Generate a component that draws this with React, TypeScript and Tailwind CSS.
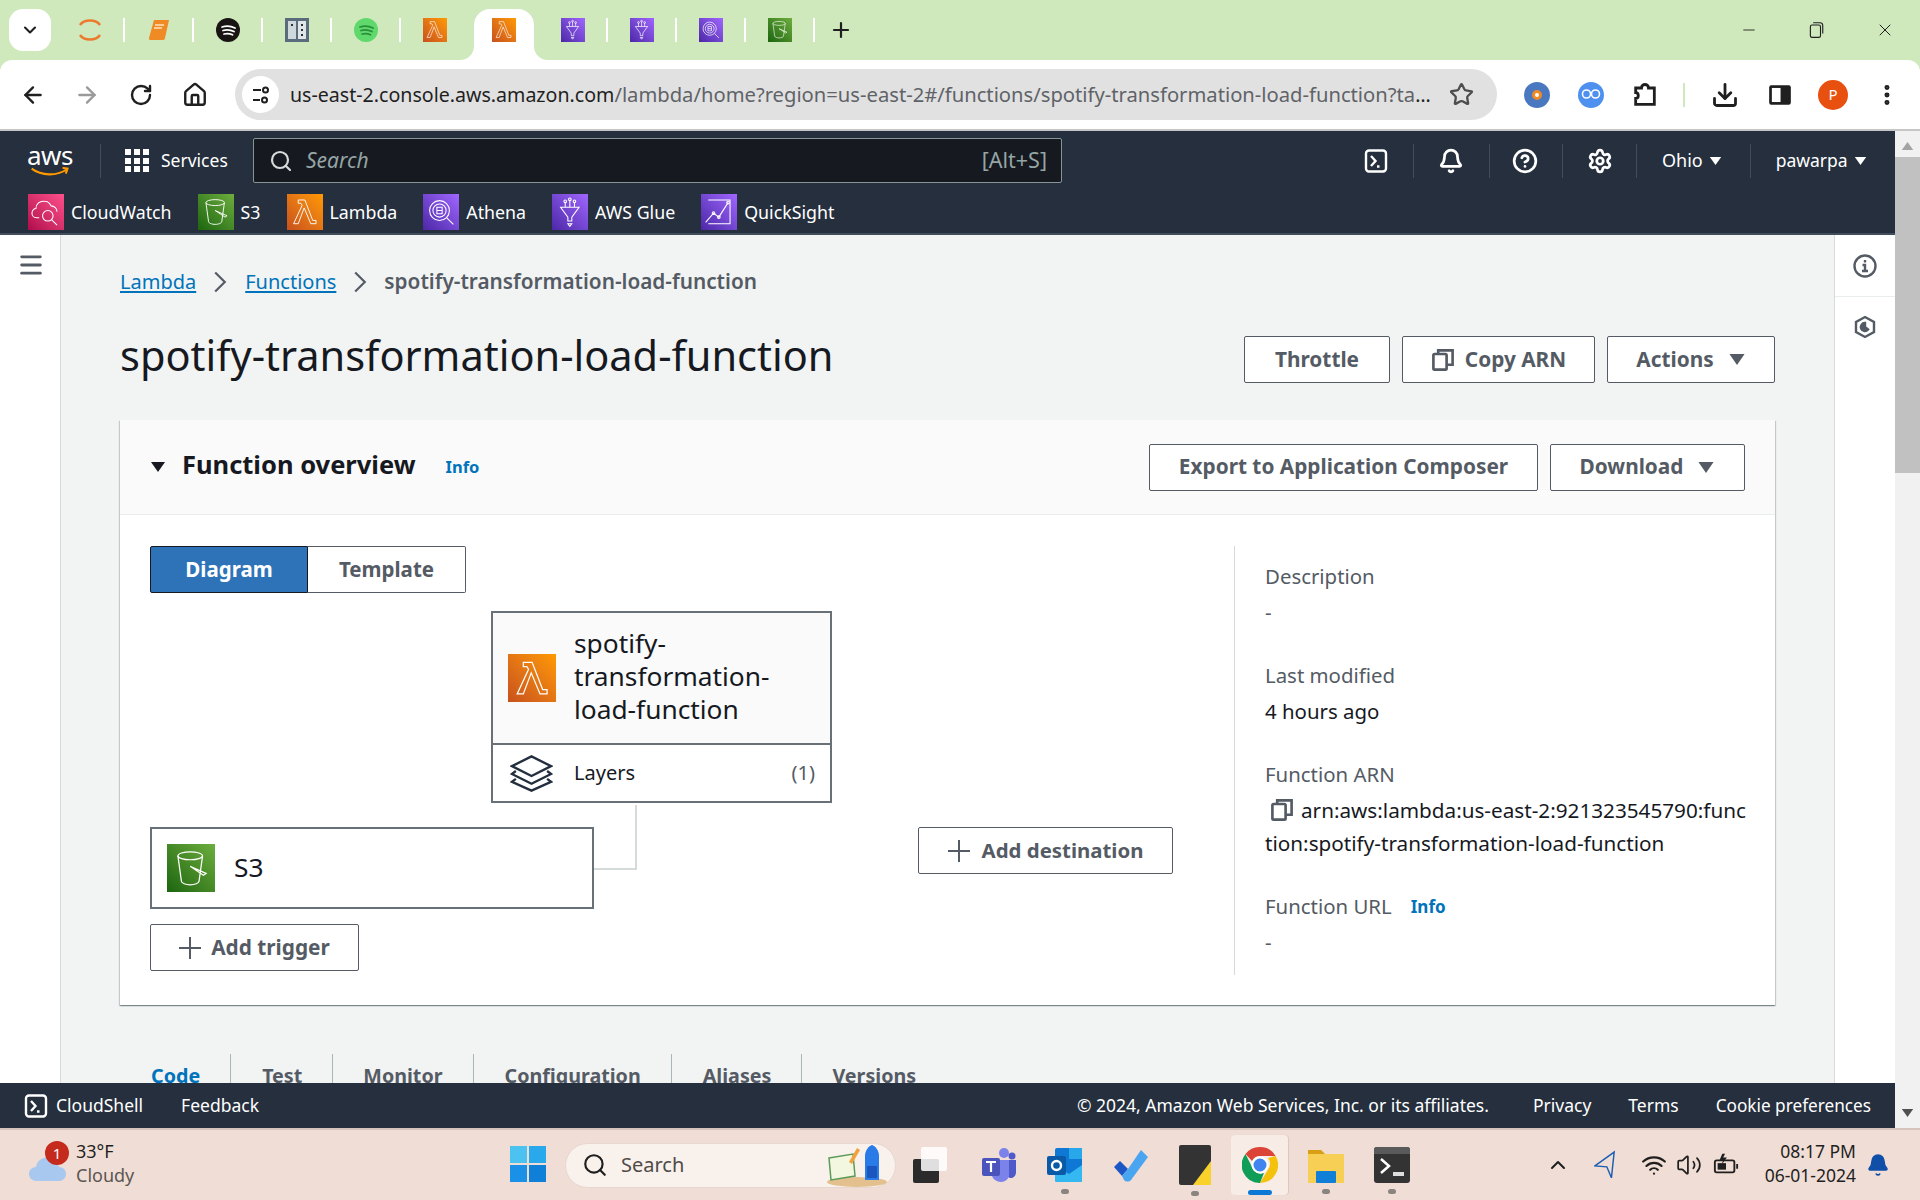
import React from "react";
import {
  ArrowLeft,
  ArrowRight,
  Bell,
  ChevronDown,
  ChevronUp,
  CircleHelp,
  Download,
  EllipsisVertical,
  House,
  Menu,
  Minus,
  Plus,
  RotateCw,
  Search,
  Settings,
  Star,
  Volume2,
  Wifi,
  X,
} from "lucide-react";

const Caret = ({ className = "" }: { className?: string }) => (
  <svg viewBox="0 0 16 12" className={className}>
    <path d="M1 1h14L8 11z" fill="currentColor" />
  </svg>
);

const LambdaGlyph = () => (
  <svg viewBox="0 0 48 48" className="w-[88%] h-[88%]" fill="none" stroke="#fff" strokeWidth="1.4">
    <path d="M14 6h10l12 31h5v5h-8L23 18l-9 24H7l13-28-2-3h-4z" />
  </svg>
);

const BucketGlyph = () => (
  <svg viewBox="0 0 48 48" className="w-[88%] h-[88%]" fill="none" stroke="#fff" strokeWidth="1.4">
    <ellipse cx="23" cy="10" rx="14" ry="4.500" />
    <path d="M9 10l4 29c0 2 5 4 10 4s10-2 10-4l4-29M23 22l18 8-3 2z" />
  </svg>
);

const GlueGlyph = () => (
  <svg viewBox="0 0 48 48" className="w-[88%] h-[88%]" fill="none" stroke="#fff" strokeWidth="1.6">
    <path d="M10 17h28L27 32v6h-6v-6zM24 6v11M17 9v8M31 9v8M21 42h6l-3 4z" />
    <circle cx="24" cy="5" r="2" />
    <circle cx="17" cy="8" r="2" />
    <circle cx="31" cy="8" r="2" />
  </svg>
);

const AthenaGlyph = () => (
  <svg viewBox="0 0 48 48" className="w-[88%] h-[88%]" fill="none" stroke="#fff" strokeWidth="1.6">
    <circle cx="22" cy="22" r="15" />
    <circle cx="22" cy="22" r="10" />
    <path d="M33 33l10 10M18 17h8v10h-8zM18 22h8" />
  </svg>
);

const CloudWatchGlyph = () => (
  <svg viewBox="0 0 48 48" className="w-[88%] h-[88%]" fill="none" stroke="#fff" strokeWidth="1.6">
    <path d="M14 33H10C5 33 3 29 3 26c0-4 3-7 6-7 0-7 6-12 13-11 5 0 8 3 10 7 5 0 9 4 9 9" />
    <circle cx="27" cy="30" r="8" />
    <path d="M33 36l8 8" />
  </svg>
);

const QuickSightGlyph = () => (
  <svg viewBox="0 0 48 48" className="w-[88%] h-[88%]" fill="none" stroke="#fff" strokeWidth="1.6">
    <path d="M8 6h33v36H8M4 40l12-14 8 6 14-22" />
    <circle cx="16" cy="26" r="2" />
    <circle cx="24" cy="32" r="2" />
    <circle cx="38" cy="10" r="2" />
  </svg>
);

const TerminalIcon = ({ className = "" }: { className?: string }) => (
  <svg viewBox="0 0 24 24" className={className} fill="none" stroke="#fff" strokeWidth="2.4">
    <rect x="2" y="1.500" width="20" height="21" rx="3" />
    <path d="M7 7l4.500 5L7 17M13 17.500h2.500" />
  </svg>
);

const CopyIcon = ({ className = "" }: { className?: string }) => (
  <svg viewBox="0 0 20 20" className={className} fill="none" stroke="currentColor" strokeWidth="2.2">
    <rect x="2" y="5" width="11" height="13" rx="1" />
    <path d="M6 5V2h12v12h-5" />
  </svg>
);

const PlusThin = () => (
  <svg viewBox="0 0 22 22" className="w-[22px] h-[22px] shrink-0" stroke="currentColor" strokeWidth="2">
    <path d="M11 0v22M0 11h22" />
  </svg>
);

const favGreen = "bg-linear-to-tr from-[#1b660f] to-[#6cae3e]";
const favOrange = "bg-linear-to-tr from-[#c8511b] to-[#f90]";
const favPurple = "bg-linear-to-tr from-[#4d27a8] to-[#a166ff]";
const favPink = "bg-linear-to-tr from-[#b0084d] to-[#ff4f8b]";

const ServiceIcon = ({ bg, size, children }: { bg: string; size: string; children: React.ReactNode }) => (
  <div className={`${bg} ${size} flex items-center justify-center shrink-0`}>{children}</div>
);

const SpotifyFav = ({ bg, line }: { bg: string; line: string }) => (
  <svg viewBox="0 0 24 24" className="w-6 h-6">
    <circle cx="12" cy="12" r="12" fill={bg} />
    <path d="M6 9c4-1.300 9-1 13 1M7 12.500c3.500-1 7.500-.7 11 1M8 16c3-.8 6-.5 8.500.8" fill="none" stroke={line} strokeWidth="1.800" strokeLinecap="round" />
  </svg>
);

const tabFavs: { node: React.ReactNode; active?: boolean; noSep?: boolean }[] = [
  {
    node: (
      <svg viewBox="0 0 24 24" className="w-6 h-6" fill="none" stroke="#ec7a2c" strokeWidth="2.500">
        <path d="M2 7c4-6 16-6 20 0M2 17c4 6 16 6 20 0" />
      </svg>
    ),
  },
  {
    node: (
      <svg viewBox="0 0 24 24" className="w-6 h-6">
        <path d="M7 2h15l-4 18c0 1-1 2-2 2H3c-1 0-1-1-1-2z" fill="#f08a24" />
        <path d="M8 7h9M7 10h8" stroke="#ffe3bf" strokeWidth="1.500" />
      </svg>
    ),
  },
  { node: <SpotifyFav bg="#191414" line="#fff" /> },
  {
    node: (
      <svg viewBox="0 0 24 24" className="w-6 h-6">
        <rect width="24" height="24" fill="#5a6b7b" />
        <rect x="3" y="3" width="8" height="18" fill="#cfd8dc" />
        <rect x="13" y="3" width="8" height="18" fill="#dfe5e8" />
        <path d="M16 6h2v2h-2zM16 11h2v2h-2zM16 16h2v2h-2zM6 6h2v2H6z" fill="#263238" />
      </svg>
    ),
  },
  { node: <SpotifyFav bg="#5fd86c" line="#2a8f3a" /> },
  { node: <ServiceIcon bg={favOrange} size="w-6 h-6"><LambdaGlyph /></ServiceIcon>, noSep: true },
  { node: <ServiceIcon bg={favOrange} size="w-6 h-6"><LambdaGlyph /></ServiceIcon>, active: true, noSep: true },
  { node: <ServiceIcon bg={favPurple} size="w-6 h-6"><GlueGlyph /></ServiceIcon> },
  { node: <ServiceIcon bg={favPurple} size="w-6 h-6"><GlueGlyph /></ServiceIcon> },
  { node: <ServiceIcon bg={favPurple} size="w-6 h-6"><AthenaGlyph /></ServiceIcon> },
  { node: <ServiceIcon bg={favGreen} size="w-6 h-6"><BucketGlyph /></ServiceIcon> },
];

const shortcuts = [
  { label: "CloudWatch", bg: favPink, glyph: <CloudWatchGlyph /> },
  { label: "S3", bg: favGreen, glyph: <BucketGlyph /> },
  { label: "Lambda", bg: favOrange, glyph: <LambdaGlyph /> },
  { label: "Athena", bg: favPurple, glyph: <AthenaGlyph /> },
  { label: "AWS Glue", bg: favPurple, glyph: <GlueGlyph /> },
  { label: "QuickSight", bg: favPurple, glyph: <QuickSightGlyph /> },
];

const pageTabs = [
  { label: "Code", cls: "text-[#0073bb] pl-[31px] pr-[30px]" },
  { label: "Test", cls: "pl-[31px] pr-[30px]" },
  { label: "Monitor", cls: "pl-[30px] pr-[30px]" },
  { label: "Configuration", cls: "pl-[31px] pr-[30px]" },
  { label: "Aliases", cls: "pl-[31px] pr-[30px]" },
  { label: "Versions", cls: "pl-[30px] pr-[31px]" },
];

const Btn = ({ className = "", children }: { className?: string; children: React.ReactNode }) => (
  <button className={`h-[47px] border border-[#545b64] rounded-[2px] bg-white text-[#545b64] text-[20.8px] font-bold flex items-center justify-center shrink-0 ${className}`}>
    {children}
  </button>
);

const TaskDot = ({ color = "bg-[#8a8480]", w = "w-[8px]" }: { color?: string; w?: string }) => (
  <span className={`absolute bottom-[-11px] left-1/2 -translate-x-1/2 h-[5px] rounded-full ${w} ${color}`} />
);

export default function App() {
  return (
    <div className="w-[1920px] h-[1200px] flex flex-col overflow-hidden bg-[#cfe9bd] font-['Noto_Sans',sans-serif]">
      {/* tab strip */}
      <div className="h-[60px] flex items-start shrink-0 pl-[9px] pt-[9px]">
        <div className="w-[42px] h-[42px] bg-white rounded-[14px] flex items-center justify-center shrink-0">
          <ChevronDown className="w-[20px] h-[20px] text-[#1f1f1f]" strokeWidth={2.5} />
        </div>
        <div className="flex items-start ml-[5px]">
          {tabFavs.map((t, i) =>
            t.active ? (
              <div key={i} className="relative w-[60px] h-[51px] ml-[4px] mr-[5px] bg-white rounded-t-[16px] flex items-start justify-center pt-[9px]">
                <svg viewBox="0 0 14 14" className="absolute bottom-0 -left-[14px] w-[14px] h-[14px]">
                  <path d="M14 0v14H0C8 14 14 8 14 0z" fill="#fff" />
                </svg>
                {t.node}
                <svg viewBox="0 0 14 14" className="absolute bottom-0 -right-[14px] w-[14px] h-[14px]">
                  <path d="M0 0v14h14C6 14 0 8 0 0z" fill="#fff" />
                </svg>
              </div>
            ) : (
              <div key={i} className="flex items-center h-[42px]">
                <div className="w-[67px] flex items-center justify-center">{t.node}</div>
                <div className={`w-[2px] h-[24px] ${t.noSep ? "bg-transparent" : "bg-white"}`} />
              </div>
            )
          )}
          <div className="h-[42px] flex items-center">
            <Plus className="w-[24px] h-[24px] ml-[14px] text-[#1f1f1f]" strokeWidth={2.2} />
          </div>
        </div>
        <div className="ml-auto flex items-center h-[42px] pr-[25px] text-[#1f1f1f]">
          <Minus className="w-[18px] h-[18px]" strokeWidth={1.2} />
          <svg viewBox="0 0 16 16" className="w-[18px] h-[18px] ml-[49px]" fill="none" stroke="currentColor" strokeWidth="1">
            <rect x="3" y="3.500" width="9" height="11" rx="1.500" />
            <path d="M5.500 1.500h6c2 0 2.500 1 2.500 2.500v7" />
          </svg>
          <X className="w-[20px] h-[20px] ml-[50px]" strokeWidth={1.2} />
        </div>
      </div>

      {/* browser toolbar */}
      <div className="h-[71px] shrink-0 bg-white rounded-t-[12px] border-b-2 border-[#c6c6c6] flex items-center text-[#1f1f1f]">
        <ArrowLeft className="w-[26px] h-[26px] ml-[20px]" strokeWidth={2.2} />
        <ArrowRight className="w-[26px] h-[26px] ml-[28px] text-[#9a9a9a]" strokeWidth={2.2} />
        <RotateCw className="w-[24px] h-[24px] ml-[29px]" strokeWidth={2.4} />
        <House className="w-[26px] h-[26px] ml-[29px]" strokeWidth={2.2} />
        <div className="ml-[27px] w-[1262px] h-[51px] rounded-full bg-[#e1e1e1] flex items-center pl-[7px] pr-[23px] shrink-0">
          <div className="w-[37px] h-[37px] rounded-full bg-white flex items-center justify-center shrink-0">
            <svg viewBox="0 0 20 20" className="w-[20px] h-[20px]" fill="none" stroke="currentColor" strokeWidth="2">
              <path d="M2 5h8M2 15h7" />
              <circle cx="14.500" cy="5" r="2.500" />
              <circle cx="13.500" cy="15" r="2.500" />
            </svg>
          </div>
          <div className="ml-[11px] text-[19.6px] whitespace-nowrap w-[1148px] truncate">
            <span className="text-[#1f1f1f]">us-east-2.console.aws.amazon.com</span>
            <span className="text-[#5f6368] text-[20.2px]">/lambda/home?region=us-east-2#/functions/spotify-transformation-load-function?tab=code</span>
          </div>
          <Star className="w-[25px] h-[25px] ml-auto text-[#4d4d4d] shrink-0" strokeWidth={2.2} />
        </div>
        <div className="ml-[27px] w-[26px] h-[26px] rounded-full bg-[#4a78c0] flex items-center justify-center shrink-0">
          <div className="w-[10px] h-[10px] rounded-full bg-white border-[3px] border-[#f08a24]" />
        </div>
        <svg viewBox="0 0 26 26" className="ml-[28px] w-[26px] h-[26px] shrink-0">
          <circle cx="13" cy="13" r="13" fill="#4d90f0" />
          <circle cx="8.500" cy="12" r="4" fill="none" stroke="#fff" strokeWidth="1.600" />
          <circle cx="17.500" cy="12" r="4" fill="none" stroke="#fff" strokeWidth="1.600" />
        </svg>
        <svg viewBox="0 0 24 24" className="ml-[27px] w-[28px] h-[28px] shrink-0" fill="none" stroke="currentColor" strokeWidth="2.400">
          <path d="M4 6h5c0-4 6-4 6 0h5v14H4v-5c3 0 3-5 0-5z" />
        </svg>
        <div className="ml-[24px] w-[2px] h-[24px] bg-[#cfe9bd] shrink-0" />
        <Download className="ml-[26px] w-[28px] h-[28px] shrink-0" strokeWidth={2.4} />
        <svg viewBox="0 0 24 24" className="ml-[28px] w-[26px] h-[26px] shrink-0">
          <rect x="2" y="3" width="20" height="18" rx="2" fill="#1f1f1f" />
          <rect x="4.500" y="5.500" width="8" height="13" fill="#fff" />
        </svg>
        <div className="ml-[25px] w-[30px] h-[30px] rounded-full bg-[#e8500f] text-white text-[15px] flex items-center justify-center shrink-0">
          P
        </div>
        <EllipsisVertical className="ml-[26px] w-[26px] h-[26px] shrink-0" strokeWidth={2.6} />
      </div>

      <div className="flex flex-1 min-h-0">
        <div className="w-[1895px] flex flex-col shrink-0">
          {/* aws nav */}
          <div className="h-[104px] shrink-0 bg-[#252f3e] border-b-2 border-[#414d5c] text-white flex flex-col">
            <div className="h-[59px] flex items-center relative">
              <div className="ml-[27px] w-[46px] flex flex-col items-center shrink-0">
                <span className="text-[26px] leading-[22px] tracking-[-0.5px]">aws</span>
                <svg viewBox="0 0 46 12" className="w-[46px] h-[10px] mt-[1px]">
                  <path d="M1 2c12 9 30 9 42 1M38 1l6 1-2 6" fill="none" stroke="#f90" strokeWidth="2.500" />
                </svg>
              </div>
              <div className="ml-[27px] w-px h-[34px] bg-[#414d5c]" />
              <div className="ml-[24px] grid grid-cols-3 gap-[2.500px] w-[24px] shrink-0">
                {Array.from({ length: 9 }).map((_, i) => (
                  <span key={i} className="h-[6px] bg-white" />
                ))}
              </div>
              <span className="ml-[12px] text-[17.5px] w-[68px]">Services</span>
              <div className="ml-[24px] w-[809px] h-[45px] bg-[#16191f] border border-[#879596] rounded-[2px] flex items-center pl-[15px] pr-[14px] shrink-0">
                <Search className="w-[24px] h-[24px] text-[#d5dbdb]" strokeWidth={2.2} />
                <span className="ml-[13px] text-[21px] italic text-[#95a5a6]">Search</span>
                <span className="ml-auto text-[21.5px] text-[#95a5a6]">[Alt+S]</span>
              </div>
              <TerminalIcon className="ml-[302px] w-[24px] h-[24px] shrink-0" />
              <div className="ml-[25px] w-px h-[34px] bg-[#414d5c]" />
              <Bell className="ml-[24px] w-[26px] h-[26px]" strokeWidth={2.5} />
              <div className="ml-[25px] w-px h-[34px] bg-[#414d5c]" />
              <CircleHelp className="ml-[22px] w-[26px] h-[26px]" strokeWidth={2.5} />
              <div className="ml-[24px] w-px h-[34px] bg-[#414d5c]" />
              <Settings className="ml-[24px] w-[26px] h-[26px]" strokeWidth={2.5} />
              <div className="ml-[23px] w-px h-[34px] bg-[#414d5c]" />
              <span className="ml-[25px] text-[18px]">Ohio</span>
              <Caret className="ml-[6px] w-[13px] h-[10px]" />
              <div className="ml-[28px] w-px h-[34px] bg-[#414d5c]" />
              <span className="ml-[25px] text-[17.5px]">pawarpa</span>
              <Caret className="ml-[6px] w-[13px] h-[10px]" />
            </div>
            <div className="flex items-center pl-[28px] gap-[26px] pt-[4px]">
              {shortcuts.map((s) => (
                <div key={s.label} className="flex items-center gap-[7px]">
                  <ServiceIcon bg={s.bg} size="w-[36px] h-[36px]">{s.glyph}</ServiceIcon>
                  <span className="text-[17.8px] whitespace-nowrap">{s.label}</span>
                </div>
              ))}
            </div>
          </div>

          {/* console body */}
          <div className="flex-1 min-h-0 flex overflow-hidden bg-[#f2f3f3]">
            <div className="w-[61px] shrink-0 bg-white border-r border-[#d5dbdb] pt-[16px] pl-[17px]">
              <Menu className="w-[28px] h-[28px] text-[#545b64]" strokeWidth={2.4} />
            </div>
            <div className="flex-1 min-w-0 px-[59px] pt-[32px]">
              <div className="flex items-center text-[20px] h-[30px]">
                <span className="text-[#0073bb] underline underline-offset-2">Lambda</span>
                <svg viewBox="0 0 12 20" className="w-[16px] h-[24px] mx-[16px] text-[#545b64]" fill="none" stroke="currentColor" strokeWidth="1.800">
                  <path d="M2 2l8 8-8 8" />
                </svg>
                <span className="text-[#0073bb] underline underline-offset-2 ml-[1px]">Functions</span>
                <svg viewBox="0 0 12 20" className="w-[16px] h-[24px] mx-[16px] text-[#545b64]" fill="none" stroke="currentColor" strokeWidth="1.800">
                  <path d="M2 2l8 8-8 8" />
                </svg>
                <span className="text-[#545b64] text-[20.75px] font-semibold">spotify-transformation-load-function</span>
              </div>

              <div className="flex items-center justify-between mt-[39px] h-[47px]">
                <h1 className="text-[41.5px] text-[#16191f] leading-none pb-[8px]">spotify-transformation-load-function</h1>
                <div className="flex gap-[12px]">
                  <Btn className="w-[146px]">Throttle</Btn>
                  <Btn className="w-[193px] gap-[10px]">
                    <CopyIcon className="w-[24px] h-[24px]" />
                    Copy ARN
                  </Btn>
                  <Btn className="w-[168px] gap-[14px]">
                    Actions
                    <Caret className="w-[18px] h-[13px]" />
                  </Btn>
                </div>
              </div>

              <div className="mt-[37px] bg-white shadow-[0_1px_1px_0_rgba(0,28,36,0.3),1px_1px_1px_0_rgba(0,28,36,0.15),-1px_1px_1px_0_rgba(0,28,36,0.15)]">
                <div className="h-[95px] bg-[#fafafa] border-b border-[#eaeded] flex items-center pl-[30px] pr-[30px]">
                  <Caret className="w-[16px] h-[12px] text-[#16191f]" />
                  <h2 className="ml-[16px] text-[25.5px] font-bold text-[#16191f] pb-[6px]">Function overview</h2>
                  <span className="ml-[30px] text-[16.5px] font-bold text-[#0073bb]">Info</span>
                  <div className="ml-auto flex gap-[12px]">
                    <Btn className="w-[389px]">Export to Application Composer</Btn>
                    <Btn className="w-[195px] gap-[14px]">
                      Download
                      <Caret className="w-[18px] h-[13px]" />
                    </Btn>
                  </div>
                </div>

                <div className="flex pl-[30px] pt-[31px] pb-[30px] h-[490px]">
                  <div className="w-[1084px] shrink-0">
                    <div className="flex h-[47px] w-[316px] text-[20.5px] font-bold">
                      <div className="w-[158px] bg-[#2e73b8] border border-[#16191f] rounded-l-[2px] text-white flex items-center justify-center">Diagram</div>
                      <div className="flex-1 bg-white border border-l-0 border-[#545b64] rounded-r-[2px] text-[#545b64] flex items-center justify-center">Template</div>
                    </div>

                    {/* function diagram */}
                    <div className="relative mt-[18px] h-[364px]">
                      <div className="absolute left-[341px] top-0 w-[341px] h-[192px] border-2 border-[#687078] flex flex-col">
                        <div className="h-[132px] bg-[#fafafa] border-b-2 border-[#687078] flex items-center pl-[15px]">
                          <ServiceIcon bg={favOrange} size="w-[48px] h-[48px]"><LambdaGlyph /></ServiceIcon>
                          <div className="ml-[18px] text-[26.3px] leading-[33px] text-[#16191f] pb-[3px]">
                            spotify-
                            <br />
                            transformation-
                            <br />
                            load-function
                          </div>
                        </div>
                        <div className="flex-1 bg-white flex items-center pl-[17px] pr-[15px] text-[20px] text-[#16191f]">
                          <svg viewBox="0 0 44 38" className="w-[43px] h-[38px] shrink-0" fill="none" stroke="#232f3e" strokeWidth="2.400">
                            <path d="M22 2L42 12 22 22 2 12zM6 17l-4 3 20 10 20-10-4-3M6 25l-4 3 20 9 20-9-4-3" />
                          </svg>
                          <span className="ml-[21px] pb-[1px]">Layers</span>
                          <span className="ml-auto text-[#545b64] pb-[1px]">(1)</span>
                        </div>
                      </div>
                      <div className="absolute left-[485px] top-[194px] w-[2px] h-[65px] bg-[#d5dbdb]" />
                      <div className="absolute left-[444px] top-[257px] w-[43px] h-[2px] bg-[#d5dbdb]" />
                      <div className="absolute left-0 top-[216px] w-[444px] h-[82px] border-2 border-[#687078] bg-white flex items-center pl-[15px]">
                        <ServiceIcon bg={favGreen} size="w-[48px] h-[48px]"><BucketGlyph /></ServiceIcon>
                        <span className="ml-[19px] text-[26.3px] text-[#16191f]">S3</span>
                      </div>
                      <Btn className="absolute left-0 top-[313px] w-[209px] gap-[10px]">
                        <PlusThin />
                        Add trigger
                      </Btn>
                      <Btn className="absolute left-[768px] top-[216px] w-[255px] gap-[12px] !text-[20.4px]">
                        <PlusThin />
                        Add destination
                      </Btn>
                    </div>
                  </div>

                  <div className="w-[511px] border-l border-[#d5dbdb] pl-[30px] text-[20.4px] text-[#16191f] leading-[33px]">
                    <div className="text-[#545b64] mt-[14px]">Description</div>
                    <div className="text-[#545b64] mt-[3px]">-</div>
                    <div className="text-[#545b64] mt-[30px]">Last modified</div>
                    <div className="mt-[3px]">4 hours ago</div>
                    <div className="text-[#545b64] mt-[30px]">Function ARN</div>
                    <div className="whitespace-nowrap mt-[3px] text-[20.7px]">
                      <CopyIcon className="inline-block w-[24px] h-[24px] ml-[5px] mr-[7px] text-[#545b64] align-[-4px]" />
                      arn:aws:lambda:us-east-2:921323545790:func
                      <br />
                      tion:spotify-transformation-load-function
                    </div>
                    <div className="mt-[30px] flex items-center text-[#545b64]">
                      Function URL
                      <span className="ml-[19px] text-[17px] font-bold text-[#0073bb]">Info</span>
                    </div>
                    <div className="text-[#545b64] mt-[3px]">-</div>
                  </div>
                </div>
              </div>

              <div className="flex mt-[49px] text-[19.7px] font-bold text-[#545b64] leading-[40px]">
                {pageTabs.map((t, i) => (
                  <div key={t.label} className={`${t.cls} ${i < pageTabs.length - 1 ? "border-r border-[#aab7b8]" : ""}`}>
                    <span className="relative top-[2px]">{t.label}</span>
                  </div>
                ))}
              </div>
            </div>
            <div className="w-[61px] shrink-0 bg-white border-l border-[#d5dbdb] text-[#545b64]">
              <div className="h-[62px] border-b border-[#eaeded] flex items-center justify-center">
                <svg viewBox="0 0 24 24" className="w-[24px] h-[24px]" fill="none" stroke="currentColor" strokeWidth="2.400">
                  <circle cx="12" cy="12" r="10.500" />
                  <path d="M12 6v2.500M9.500 11H12v6M9 17h6" />
                </svg>
              </div>
              <div className="h-[60px] flex items-center justify-center">
                <svg viewBox="0 0 24 24" className="w-[24px] h-[24px]" fill="none" stroke="currentColor" strokeWidth="2.400">
                  <path d="M12 2l9 5v10l-9 5-9-5V7z" />
                  <path d="M12 8a4 4 0 1 0 3 6.500L12 12z" fill="currentColor" />
                </svg>
              </div>
            </div>
          </div>

          {/* console footer */}
          <div className="h-[45px] shrink-0 bg-[#252f3e] text-white text-[17.5px] flex items-center">
            <TerminalIcon className="ml-[24px] w-[24px] h-[24px]" />
            <span className="ml-[8px]">CloudShell</span>
            <span className="ml-[38px]">Feedback</span>
            <span className="ml-auto">© 2024, Amazon Web Services, Inc. or its affiliates.</span>
            <span className="ml-[44px]">Privacy</span>
            <span className="ml-[37px]">Terms</span>
            <span className="ml-[37px] mr-[24px] text-[17.2px]">Cookie preferences</span>
          </div>
        </div>

        <div className="w-[25px] shrink-0 bg-[#f1f1f1] flex flex-col items-center relative">
          <Caret className="w-[13px] h-[10px] text-[#a3a3a3] rotate-180 mt-[10px]" />
          <div className="w-full h-[316px] bg-[#c1c1c1] mt-[6px]" />
          <Caret className="w-[13px] h-[10px] text-[#505050] mt-auto mb-[10px]" />
        </div>
      </div>

      {/* windows taskbar */}
      <div className="h-[72px] shrink-0 bg-[#f0ddd5] border-t-2 border-[#d6c4bc] flex items-center text-[#1f1f1f]">
        <div className="relative ml-[28px] w-[40px] h-[30px] shrink-0 mt-[6px]">
          <svg viewBox="0 0 40 30" className="w-full h-full">
            <path d="M9 28C3 28 1 24 1 21c0-4 3-7 7-7 1-7 8-11 14-9 5 2 8 5 9 9 4 0 7 3 7 7 0 4-3 7-7 7z" fill="#a9c8ef" />
          </svg>
          <span className="absolute -top-[12px] left-[17px] w-[24px] h-[24px] rounded-full bg-[#c42b1c] text-white text-[15px] flex items-center justify-center">1</span>
        </div>
        <div className="ml-[8px] w-[70px] shrink-0 text-[18px] leading-[24px] pb-[4px]">
          <div>33°F</div>
          <div className="text-[#5c5652]">Cloudy</div>
        </div>
        <div className="ml-[364px] w-[36px] h-[36px] grid grid-cols-2 gap-[2px] shrink-0 mb-[2px]">
          <span className="bg-[#4cc2f1]" />
          <span className="bg-[#2aa8ec]" />
          <span className="bg-[#1a91e6]" />
          <span className="bg-[#0f7fd8]" />
        </div>
        <div className="ml-[19px] w-[331px] h-[45px] rounded-full bg-[#f9f1ec] border border-[#e6d8d0] flex items-center pl-[16px] shrink-0 relative">
          <Search className="w-[26px] h-[26px]" strokeWidth={2} />
          <span className="ml-[13px] text-[20px] text-[#4f4a47]">Search</span>
          <svg viewBox="0 0 64 44" className="absolute right-[8px] top-0 w-[64px] h-[44px]">
            <ellipse cx="34" cy="38" rx="30" ry="5" fill="#e3c08e" />
            <path d="M6 14l24-4 2 22-24 4z" fill="#f4f7df" stroke="#5c9a57" strokeWidth="1.500" />
            <path d="M26 18l8-14 3 2-8 14z" fill="#f2a13c" />
            <path d="M42 36V12c0-6 4-10 7-11 3 1 7 5 7 11v24z" fill="#2a7be8" />
            <path d="M44 34V22h10v12z" fill="#1a55c0" />
          </svg>
        </div>
        <div className="relative ml-[17px] w-[34px] h-[36px] shrink-0">
          <span className="absolute left-0 bottom-0 w-[26px] h-[24px] bg-[#2b2b2b] rounded-[2px]" />
          <span className="absolute right-0 top-0 w-[26px] h-[24px] bg-white/85 rounded-[2px]" />
        </div>
        <div className="relative ml-[34px] w-[36px] h-[36px] shrink-0">
          <svg viewBox="0 0 36 36" className="w-full h-full">
            <circle cx="23" cy="6" r="5" fill="#7b83eb" />
            <circle cx="31" cy="9" r="3.500" fill="#5059c9" />
            <path d="M26 13h9v12c0 4-3 6-5 6-3 0-4-2-4-4z" fill="#5059c9" />
            <path d="M11 13h17v15c0 4-4 7-8 7s-9-3-9-7z" fill="#7b83eb" />
            <rect x="1" y="11" width="18" height="18" rx="2" fill="#4b53bc" />
            <path d="M5 15h10M10 15v10" stroke="#fff" strokeWidth="2.200" />
          </svg>
        </div>
        <div className="relative ml-[30px] w-[36px] h-[36px] shrink-0">
          <svg viewBox="0 0 36 36" className="w-full h-full">
            <rect x="8" y="1" width="27" height="34" rx="2" fill="#0f78d4" />
            <path d="M22 1h13v11H22z" fill="#28a8ea" />
            <path d="M8 18l14 9 13-9v15c0 2-1 2-2 2H10c-1 0-2-1-2-2z" fill="#35b8f1" />
            <rect x="0" y="9" width="19" height="19" rx="2" fill="#0a5aa8" />
            <circle cx="9.500" cy="18.500" r="4.500" fill="none" stroke="#fff" strokeWidth="2.400" />
          </svg>
          <TaskDot />
        </div>
        <div className="relative ml-[30px] w-[36px] h-[36px] shrink-0">
          <svg viewBox="0 0 36 36" className="w-full h-full">
            <path d="M1 20l6-6 8 8-6 7z" fill="#1b56c4" />
            <path d="M9 29l6-7L28 3l7 7-17 23c-2 2-5 2-7 0z" fill="#4aa5f0" />
          </svg>
        </div>
        <div className="relative ml-[30px] w-[32px] h-[40px] shrink-0 bg-[#333] rounded-[2px]">
          <svg viewBox="0 0 32 40" className="w-full h-full">
            <path d="M14 40l18-24v24z" fill="#f8d22a" />
          </svg>
          <TaskDot />
        </div>
        <div className="relative ml-[20px] w-[57px] h-[60px] shrink-0 bg-[#f7ece6] rounded-[4px] shadow-[1px_0_1px_rgba(0,0,0,0.1)] flex items-center justify-center">
          <svg viewBox="0 0 36 36" className="w-[36px] h-[36px]">
            <path d="M18 0a18 18 0 0 1 15.600 9H18a9 9 0 0 0-8 5L3.500 7A18 18 0 0 1 18 0z" fill="#db4437" />
            <path d="M33.600 9A18 18 0 0 1 18 36l8-13.500A9 9 0 0 0 26 11z" fill="#f4c20d" />
            <path d="M18 36A18 18 0 0 1 3.500 7L10 20a9 9 0 0 0 12 6z" fill="#0f9d58" />
            <circle cx="18" cy="18" r="7.500" fill="#3f84ef" stroke="#fff" strokeWidth="2" />
          </svg>
          <span className="absolute bottom-0 left-1/2 -translate-x-1/2 w-[24px] h-[5px] rounded-full bg-[#0a78d4]" />
        </div>
        <div className="relative ml-[20px] w-[36px] h-[36px] shrink-0">
          <svg viewBox="0 0 36 36" className="w-full h-full">
            <path d="M0 3h13l4 4h19v29H0z" fill="#f7cf55" />
            <path d="M0 3h13l4 4H0z" fill="#d99f14" />
            <rect x="8" y="24" width="20" height="12" rx="1" fill="#0f7fd8" />
          </svg>
          <TaskDot />
        </div>
        <div className="relative ml-[30px] w-[36px] h-[36px] shrink-0 bg-[#333] rounded-[3px]">
          <svg viewBox="0 0 36 36" className="w-full h-full" fill="none" stroke="#fff" strokeWidth="2.500">
            <path d="M7 12l8 7-8 7" />
            <path d="M19 27h11" stroke="#ddd" strokeWidth="4" />
          </svg>
          <span className="absolute top-0 left-0 w-full h-[7px] bg-[#5a5a5a] rounded-t-[3px]" />
          <TaskDot />
        </div>
        <ChevronUp className="ml-[136px] w-[24px] h-[24px] shrink-0" strokeWidth={2} />
        <svg viewBox="0 0 24 32" className="ml-[24px] w-[22px] h-[30px] shrink-0" fill="none" stroke="#1b5fb5" strokeWidth="1.600">
          <path d="M1 17L22 2l-3 28-5-12z" />
        </svg>
        <Wifi className="ml-[25px] w-[26px] h-[26px] shrink-0" strokeWidth={2} />
        <Volume2 className="ml-[9px] w-[26px] h-[26px] shrink-0" strokeWidth={1.6} />
        <svg viewBox="0 0 28 28" className="ml-[11px] w-[26px] h-[26px] shrink-0">
          <rect x="2" y="9" width="21" height="13" rx="2" fill="none" stroke="#1f1f1f" strokeWidth="2" />
          <rect x="5" y="12" width="9" height="7" fill="#1f1f1f" />
          <path d="M25 13h2v5h-2zM10 2l-3 7h4l-2 5 6-8h-4l2-4z" fill="#1f1f1f" />
        </svg>
        <div className="ml-[3px] w-[114px] text-right text-[17.5px] leading-[24px] shrink-0 pb-[4px]">
          <div>08:17 PM</div>
          <div>06-01-2024</div>
        </div>
        <Bell className="ml-[10px] w-[24px] h-[24px] text-[#0f4fa8] fill-[#0f4fa8] shrink-0" strokeWidth={1.5} />
      </div>
    </div>
  );
}
